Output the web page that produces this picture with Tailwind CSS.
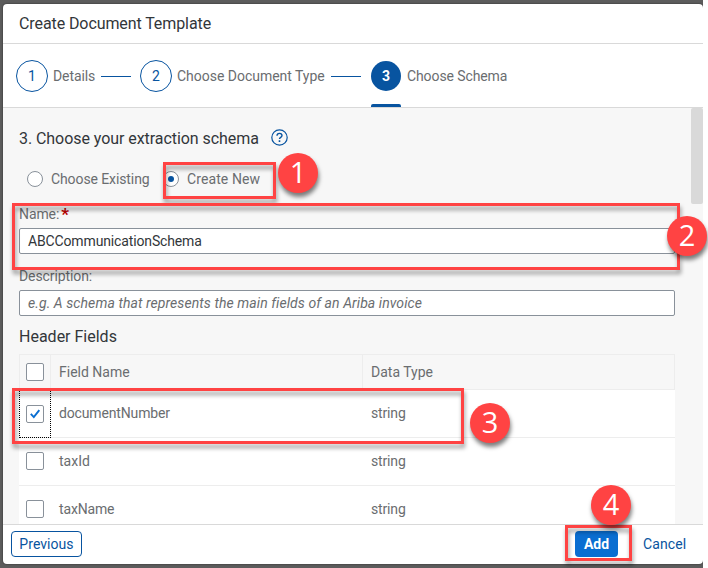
<!DOCTYPE html>
<html lang="en">
<head>
<meta charset="utf-8">
<title>Create Document Template</title>
<script src="https://cdn.jsdelivr.net/npm/@tailwindcss/browser@4"></script>
</head>
<body class="relative h-[568px] w-[708px] overflow-hidden bg-white font-['Roboto','Noto_Sans',sans-serif] text-[14px] leading-[20px] text-[#6a6d70]">
<div class="h-[568px] w-[703px] overflow-hidden bg-[#5c5c5c] pt-[4px] pl-[3px]">
  <main class="flex h-[560px] w-[700px] flex-col overflow-hidden rounded-[4px] bg-white shadow-[0_0_2px_rgba(0,0,0,0.6)]">
    <header class="flex h-[40px] shrink-0 items-center border-b border-[#d9d9d9] pl-4 text-[16px] text-[#32363a]"><h1 class="tracking-[-0.09px]">Create Document Template</h1></header>

    <!-- Wizard steps -->
    <nav class="flex h-[64px] shrink-0 items-center border-b border-[#d9d9d9] pl-[13px]">
      <span class="flex size-8 items-center justify-center rounded-full border border-[#0854a0] text-[#0854a0]">1</span>
      <span class="ml-[5px] w-[43px] whitespace-nowrap tracking-[-0.1px]">Details</span>
      <span class="mt-[2px] ml-[5px] h-px w-[30px] bg-[#0854a0]"></span>
      <span class="ml-[9px] flex size-8 items-center justify-center rounded-full border border-[#0854a0] text-[#0854a0]">2</span>
      <span class="ml-[5px] w-[149px] whitespace-nowrap tracking-[-0.02px]">Choose Document Type</span>
      <span class="mt-[2px] ml-[5px] h-px w-[30px] bg-[#0854a0]"></span>
      <span class="ml-[10px] flex h-full w-[30px] flex-col items-center justify-between pt-[17px]">
        <b class="flex size-[30px] items-center justify-center rounded-full bg-[#0854a0] text-white">3</b>
        <i class="h-[3px] w-[30px] rounded-t-[2px] bg-[#0854a0]"></i>
      </span>
      <span class="ml-[6px] whitespace-nowrap tracking-[-0.1px]">Choose Schema</span>
    </nav>

    <section class="flex min-h-0 flex-1 justify-between overflow-hidden bg-[#f7f7f7]">
      <div class="ml-4 w-[656px] shrink-0 pt-[19px]">
        <div class="flex h-6 items-center text-[16px] text-[#32363a]">
          <h2 class="w-[252px] whitespace-nowrap tracking-[-0.06px]">3. Choose your extraction schema</h2>
          <svg class="-mt-[4px] size-[17px]" viewBox="0 0 17 17" fill="none" stroke="#0854a0"><circle cx="8.5" cy="8.5" r="7.7" stroke-width="1.2"/><path d="M6 6.7C6 5.2 7 4.4 8.5 4.4s2.5.8 2.5 2.2C11 8.4 8.5 8.2 8.5 10" stroke-width="1.4"/><path d="M8.5 11.3v1.6" stroke-width="1.6"/></svg>
        </div>
        <div class="mt-[18px] flex h-5 items-center">
          <span class="ml-2 size-4 rounded-full border border-[#89919a] bg-white"></span>
          <span class="ml-2 w-[112px] whitespace-nowrap tracking-[-0.1px]">Choose Existing</span>
          <span class="flex size-4 items-center justify-center rounded-full border border-[#89919a] bg-white"><i class="size-[6px] rounded-full bg-[#0854a0]"></i></span>
          <span class="ml-2 whitespace-nowrap tracking-[0.1px]">Create New</span>
        </div>
        <label class="mt-[15px] block h-5 tracking-[-0.1px]">Name:<b class="relative top-px ml-[2px] text-[17px] leading-none text-[#bb0000]">*</b></label>
        <div class="mt-1 flex h-[26px] items-center rounded-[2px] border border-[#89919a] bg-white pl-2 tracking-[-0.14px] text-[#32363a]">ABCCommunicationSchema</div>
        <label class="mt-[12px] block h-5 tracking-[-0.1px]">Description:</label>
        <div class="mt-1 flex h-[26px] items-center rounded-[2px] border border-[#89919a] bg-white pl-2 tracking-[0.08px] italic">e.g. A schema that represents the main fields of an Ariba invoice</div>
        <h3 class="mt-[11px] h-[27px] text-[16px] text-[#32363a]">Header Fields</h3>
        <div class="grid h-[36px] grid-cols-[31px_312px_1fr] border border-r-0 border-[#ededed]">
          <div class="flex items-center border-r border-[#ededed] pl-[6px]"><i class="size-[18px] rounded-[2px] border border-[#89919a] bg-white"></i></div>
          <div class="flex items-center border-r border-[#ededed] pl-2">Field Name</div>
          <div class="flex items-center border-r border-[#ededed] pl-2">Data Type</div>
        </div>
        <div class="grid h-[48px] grid-cols-[32px_312px_1fr] border-b border-[#ededed] bg-white tracking-[-0.15px]">
          <div class="flex h-[48px] items-center border border-dotted border-black pl-[6px]"><svg class="size-[18px]" viewBox="0 0 18 18" fill="none"><rect x=".5" y=".5" width="17" height="17" rx="1.5" stroke="#89919a"/><path d="m4.8 8.9 3 3.2 5.5-7" stroke="#0a6ed1" stroke-width="1.9"/></svg></div>
          <div class="flex items-center pb-[2px] pl-2">documentNumber</div>
          <div class="flex items-center pb-[2px] pl-2">string</div>
        </div>
        <div class="grid h-[48px] grid-cols-[32px_312px_1fr] border-b border-[#ededed] bg-white pb-px">
          <div class="flex items-center pl-[7px]"><i class="size-[18px] rounded-[2px] border border-[#89919a]"></i></div>
          <div class="flex items-center pl-2">taxId</div>
          <div class="flex items-center pl-2 tracking-[-0.15px]">string</div>
        </div>
        <div class="grid h-[48px] grid-cols-[32px_312px_1fr] border-b border-[#ededed] bg-white pb-px">
          <div class="flex items-center pl-[7px]"><i class="size-[18px] rounded-[2px] border border-[#89919a]"></i></div>
          <div class="flex items-center pl-2 tracking-[-0.15px]">taxName</div>
          <div class="flex items-center pl-2 tracking-[-0.15px]">string</div>
        </div>
      </div>
      <div class="h-24 w-3 rounded-[2px] bg-[#d9d9d9]"></div>
    </section>

    <footer class="flex h-[40px] shrink-0 items-center border-t border-[#d9d9d9] pb-px pl-2">
      <button class="h-[26px] w-[71px] rounded-[4px] border border-[#0854a0] tracking-[0.05px] text-[#0854a0]">Previous</button>
      <button class="ml-[493px] h-[26px] w-[43px] rounded-[4px] bg-[#0a6ed1] font-bold text-white">Add</button>
      <button class="ml-[25px] tracking-[0.1px] text-[#0854a0]">Cancel</button>
    </footer>
  </main>
</div>

<!-- Callout annotations -->
<div class="font-['Open_Sans',sans-serif] text-[29px] leading-[38px] text-white">
  <div class="absolute top-[162px] left-[163px] h-[37px] w-[113px] border-[3px] border-[#ff4343] drop-shadow-[1px_4px_2px_rgba(0,0,0,0.4)]"></div>
  <div class="absolute top-[203px] left-[12px] h-[67px] w-[668px] border-[3px] border-[#ff4343] drop-shadow-[1px_4px_2px_rgba(0,0,0,0.4)]"></div>
  <div class="absolute top-[388px] left-[12px] h-[56px] w-[452px] border-[3px] border-[#ff4343] drop-shadow-[1px_4px_2px_rgba(0,0,0,0.4)]"></div>
  <div class="absolute top-[525px] left-[565px] h-[36px] w-[67px] border-[3px] border-[#ff4343] drop-shadow-[1px_4px_2px_rgba(0,0,0,0.4)]"></div>
  <div class="absolute top-[153px] left-[278px] size-10 rounded-full bg-[#ff4343] text-center shadow-[1px_4px_4px_rgba(0,0,0,0.5)]">1</div>
  <div class="absolute top-[216px] left-[667px] size-10 rounded-full bg-[#ff4343] text-center shadow-[1px_4px_4px_rgba(0,0,0,0.5)]">2</div>
  <div class="absolute top-[403px] left-[470px] size-10 rounded-full bg-[#ff4343] text-center shadow-[1px_4px_4px_rgba(0,0,0,0.5)]">3</div>
  <div class="absolute top-[485px] left-[591px] size-10 rounded-full bg-[#ff4343] text-center shadow-[1px_4px_4px_rgba(0,0,0,0.5)]">4</div>
</div>
</body>
</html>
